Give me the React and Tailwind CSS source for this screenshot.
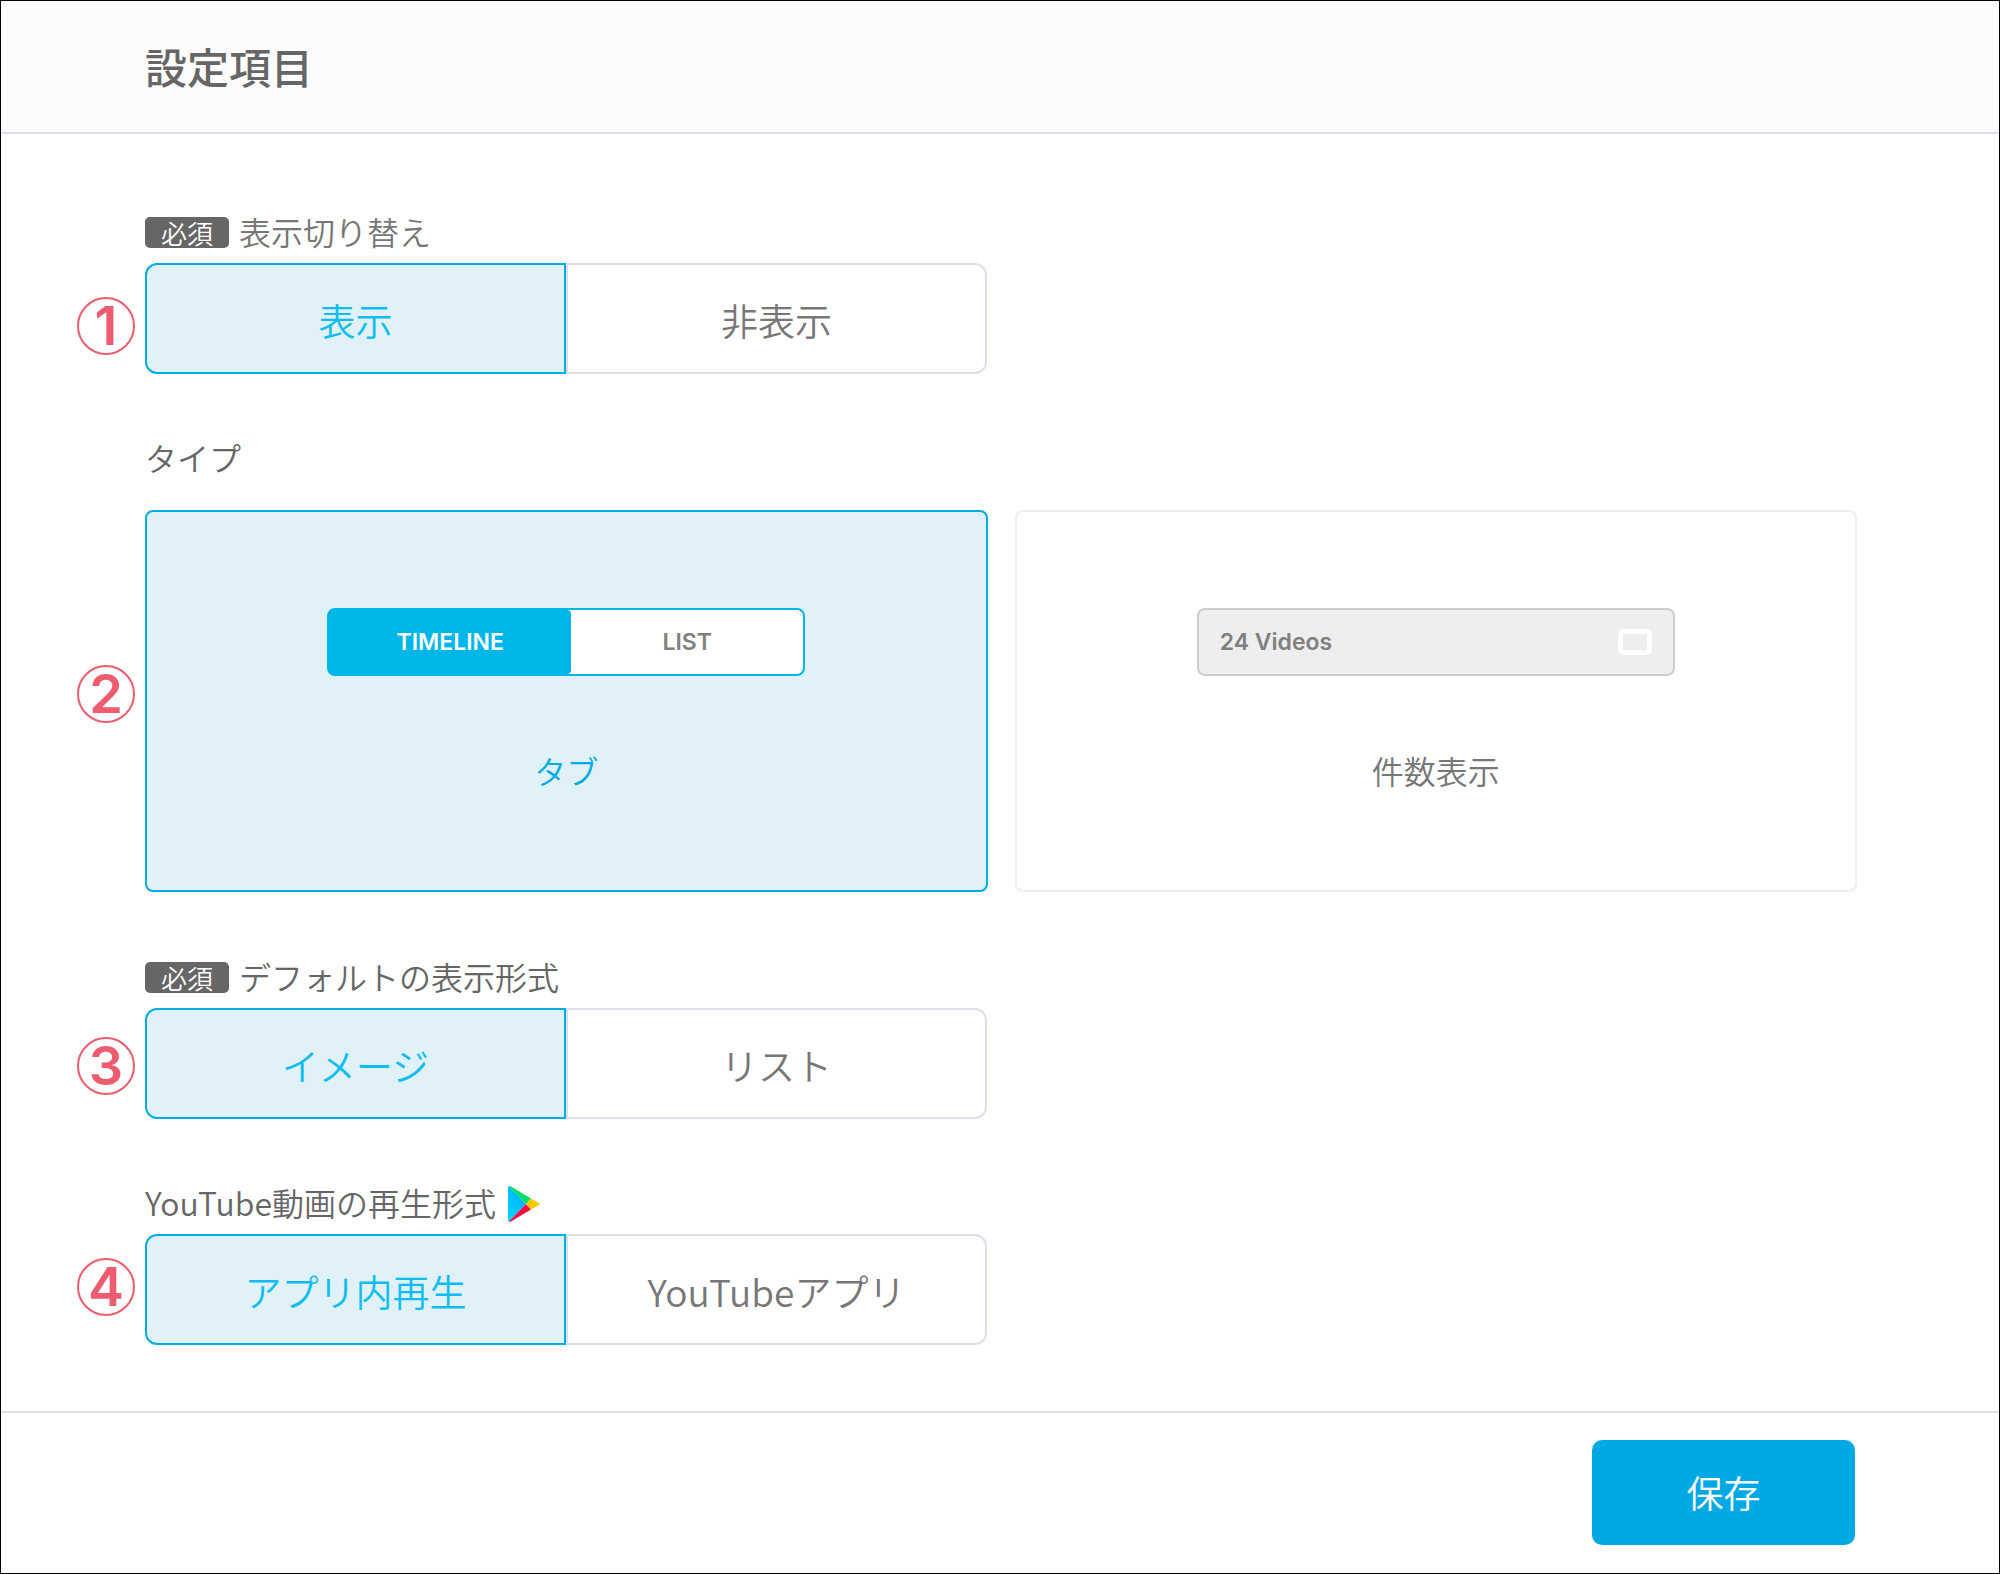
import { useState } from "react";

const MARKER = "absolute -left-[68px] flex h-[58px] w-[58px] items-center justify-center rounded-full border-2 border-[#ee5c70] font-['Inter','Liberation_Sans',sans-serif] text-[54px] leading-none font-semibold text-[#ee5c70]";

function Marker({ className, children }) {
  return <span className={`${MARKER} ${className}`}>{children}</span>;
}

function RequiredBadge() {
  return (
    <span className="flex h-[31px] w-[84px] items-center justify-center rounded-[5px] bg-[#666666] text-[26px] leading-none font-[350] text-white">
      必須
    </span>
  );
}

function PlayIcon() {
  return (
    <svg viewBox="0 0 32 36" className="h-9 w-8" aria-hidden="true">
      <defs>
        <linearGradient id="play-blue" x1="1" y1="0" x2="0" y2="1">
          <stop offset="0" stopColor="#00a6ff" />
          <stop offset="1" stopColor="#00d8ff" />
        </linearGradient>
      </defs>
      <path d="M0 1.5C0 .8.5.2 1 .5L18 18 1 35.5C.5 35.8 0 35.3 0 34.6Z" fill="url(#play-blue)" />
      <path d="M1 .4C1.6 0 2.3 0 3 .4L23 12.6 18 18Z" fill="#00e070" />
      <path d="M1 35.6C1.6 36 2.3 36 3 35.6L23 23.4 18 18Z" fill="#ff0a44" />
      <path d="M23 12.6L31 17.2C32.2 17.8 32.2 18.4 31 19L23 23.4 18 18Z" fill="#ffc900" />
    </svg>
  );
}

function Toggle({ label, options }) {
  const [selected, setSelected] = useState(0);

  return (
    <div role="group" aria-label={label} className="mt-[15px] grid h-[111px] w-1/2 grid-cols-2 pr-[14px]">
      {options.map((option, idx) => (
        <button
          key={option}
          type="button"
          aria-pressed={selected === idx}
          onClick={() => setSelected(idx)}
          className={`cursor-pointer border-2 pt-[3px] text-[37px] leading-none font-[350] first:rounded-l-xl last:rounded-r-xl ${
            selected === idx
              ? "border-[#00ace3] bg-[#e0f1f8] text-[#10bdf2]"
              : "border-[#dce0e8] bg-white text-[#777777]"
          }`}
        >
          {option}
        </button>
      ))}
    </div>
  );
}

function TypeCard({ label, active, onClick, children }) {
  return (
    <button
      type="button"
      aria-pressed={active}
      onClick={onClick}
      className={`flex h-[382px] cursor-pointer flex-col items-center rounded-lg border-2 pt-24 text-[32px] leading-10 font-[350] ${
        active ? "border-[#00ace3] bg-[#e0f1f8] text-[#00ace3]" : "border-[#eeeeee] bg-white text-[#777777]"
      }`}
    >
      {children}
      <span className="mt-[74px]">{label}</span>
    </button>
  );
}

export default function App() {
  const [type, setType] = useState("tab");

  return (
    <div className="flex min-h-screen flex-col border border-black bg-white font-['Noto_Sans_CJK_JP',sans-serif] text-[#666666]">
      <header className="border-b-2 border-[#dce0e8] bg-[#fcfcfc] px-36 pt-[39px] pb-[41px]">
        <h1 className="text-[42px] leading-[51px] font-medium">設定項目</h1>
      </header>

      <main className="flex-1 pt-[83px] pr-[142px] pb-16 pl-36">
        {/* Visibility */}
        <section className="relative">
          <Marker className="top-20">1</Marker>
          <div className="flex h-[31px] items-center gap-2.5">
            <RequiredBadge />
            <h2 className="pb-1 text-[32px] leading-none font-[350] text-[#777777]">表示切り替え</h2>
          </div>
          <Toggle label="表示切り替え" options={["表示", "非表示"]} />
        </section>

        {/* Header type */}
        <section className="relative mt-[69px]">
          <Marker className="top-[222px]">2</Marker>
          <h2 className="text-[32px] leading-[28px] font-[350]">タイプ</h2>
          <div className="mt-[39px] grid grid-cols-2 gap-[27px]">
            <TypeCard label="タブ" active={type === "tab"} onClick={() => setType("tab")}>
              <span className="flex h-[68px] w-[478px] rounded-lg border-2 border-[#00b5e7] bg-white font-['Inter','Liberation_Sans',sans-serif] text-[23px] font-semibold">
                <span className="flex w-[242px] items-center justify-center rounded-r-sm bg-[#00b5e7] text-white">TIMELINE</span>
                <span className="flex flex-1 items-center justify-center text-[#808080]">LIST</span>
              </span>
            </TypeCard>
            <TypeCard label="件数表示" active={type === "count"} onClick={() => setType("count")}>
              <span className="flex h-[68px] w-[478px] items-center justify-between rounded-lg border-2 border-[#cccccc] bg-[#eeeeee] px-[21px] font-['Inter','Liberation_Sans',sans-serif] text-[23px] font-semibold text-[#808080]">
                24 Videos
                <span className="h-[26px] w-[34px] rounded-[5px] border-[5px] border-white" />
              </span>
            </TypeCard>
          </div>
        </section>

        {/* Default layout */}
        <section className="relative mt-[70px]">
          <Marker className="top-[75px]">3</Marker>
          <div className="flex h-[31px] items-center gap-2.5">
            <RequiredBadge />
            <h2 className="pb-1 text-[32px] leading-none font-[350]">デフォルトの表示形式</h2>
          </div>
          <Toggle label="デフォルトの表示形式" options={["イメージ", "リスト"]} />
        </section>

        {/* YouTube playback, Android only */}
        <section className="relative mt-[69px]">
          <Marker className="top-[70px]">4</Marker>
          <div className="flex h-[31px] items-center gap-3">
            <h2 className="pb-1 text-[32px] leading-none font-[350]">YouTube動画の再生形式</h2>
            <PlayIcon />
          </div>
          <Toggle label="YouTube動画の再生形式" options={["アプリ内再生", "YouTubeアプリ"]} />
        </section>
      </main>

      <footer className="flex justify-end border-t-2 border-[#dce0e8] pt-[27px] pr-36 pb-7">
        <button type="button" className="h-[105px] w-[263px] cursor-pointer rounded-[10px] bg-[#00a9e4] text-[37px] leading-none font-[350] text-white">
          保存
        </button>
      </footer>
    </div>
  );
}
